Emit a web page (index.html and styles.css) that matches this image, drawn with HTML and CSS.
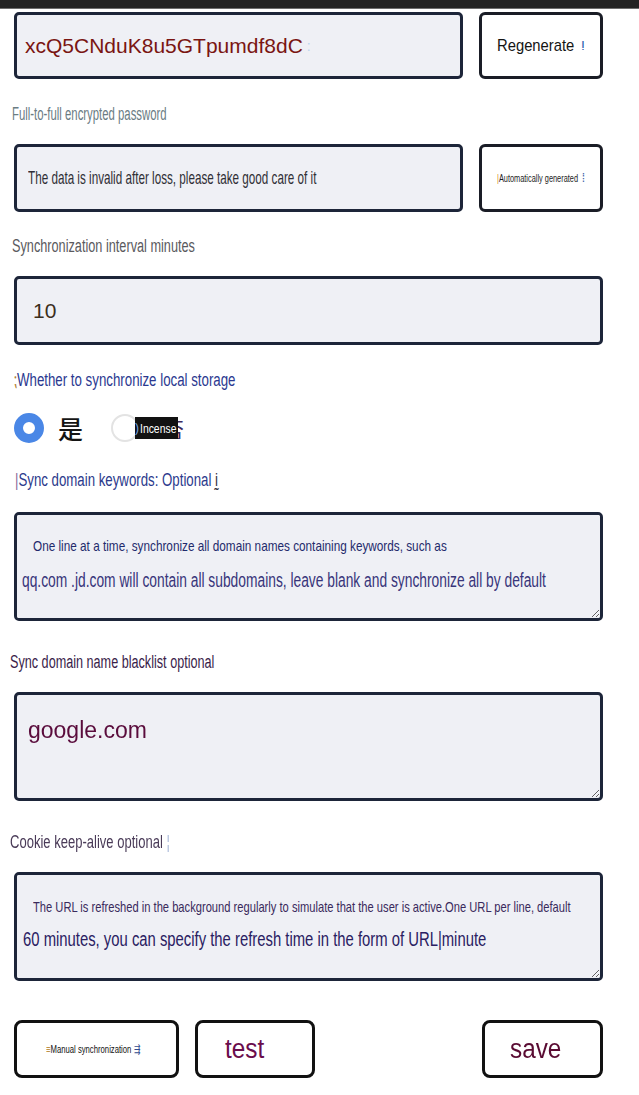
FILE: index.html
```html
<!DOCTYPE html>
<html lang="en">
<head>
<meta charset="utf-8">
<title>Sync settings</title>
<link rel="stylesheet" href="styles.css">
</head>
<body>
<div class="topbar"></div>
<main class="form">
  <div class="row r1">
    <div class="field short"><span class="t-key">xcQ5CNduK8u5GTpumdf8dC</span><span class="caret-blue">:</span></div>
    <button class="btn side"><span class="t-regen">Regenerate</span><span class="spark">ⵑ</span></button>
  </div>

  <div class="label l1"><span class="t-l1">Full-to-full encrypted password</span></div>

  <div class="row r2">
    <div class="field short f2"><span class="t-f2">The data is invalid after loss, please take good care of it</span></div>
    <button class="btn side"><span class="t-auto"><span class="bar-o">|</span>Automatically generated</span><span class="spark small">⁞</span></button>
  </div>

  <div class="label l2"><span class="t-l2">Synchronization interval minutes</span></div>

  <div class="field full f3"><span class="t-ten">10</span></div>

  <div class="label l3"><span class="t-l3"><span class="dot">⁏</span>Whether to synchronize local storage</span></div>

  <div class="radios">
    <span class="radio on"></span>
    <span class="cjk">是</span>
    <span class="radio off"></span>
    <span class="tip"><span class="paren">)</span><span class="t-inc">Incense</span></span>
    <span class="cjk-cut">否</span>
  </div>

  <div class="label l4"><span class="t-l4"><span class="cursor">|</span>Sync domain keywords: Optional <span class="dot2">ḭ</span></span></div>

  <div class="area a1">
    <div class="ln1"><span class="t-a1a">One line at a time, synchronize all domain names containing keywords, such as</span></div>
    <div class="ln2"><span class="t-a1b">qq.com .jd.com will contain all subdomains, leave blank and synchronize all by default</span></div>
  </div>

  <div class="label l5"><span class="t-l5">Sync domain name blacklist optional</span></div>

  <div class="area a2">
    <div class="ln1"><span class="t-google">google.com</span></div>
  </div>

  <div class="label l6"><span class="t-l6">Cookie keep-alive optional <span class="dot3">¦</span></span></div>

  <div class="area a3">
    <div class="ln1"><span class="t-a3a">The URL is refreshed in the background regularly to simulate that the user is active.One URL per line, default</span></div>
    <div class="ln2"><span class="t-a3b">60 minutes, you can specify the refresh time in the form of URL|minute</span></div>
  </div>

  <div class="actions">
    <button class="btn act manual"><span class="t-manual"><span class="g1">≡</span>Manual synchronization <span class="g2">⇶</span></span></button>
    <button class="btn act test"><span class="t-test">test</span></button>
    <span class="spacer"></span>
    <button class="btn act save"><span class="t-save">save</span></button>
  </div>
</main>
</body>
</html>
```

FILE: styles.css
```css
* { box-sizing: border-box; }

html, body {
  margin: 0;
  padding: 0;
  background: #ffffff;
}

body {
  font-family: "Liberation Sans", Arial, sans-serif;
  width: 639px;
  height: 1095px;
  overflow: hidden;
}

.topbar {
  height: 9px;
  background: #232323;
  border-bottom: 1px solid #6d6d6d;
}

.form {
  padding: 0 36px 0 14px;
  display: flex;
  flex-direction: column;
}

.row {
  display: flex;
  gap: 16px;
}

.r1 { margin-top: 3px; height: 67px; }
.r2 { margin-top: 20px; height: 68px; }

.field {
  border: 3px solid #1d2539;
  border-radius: 5px;
  background: #eff0f5;
  display: flex;
  align-items: center;
  white-space: nowrap;
  overflow: hidden;
}

.field.short { width: 449px; padding-left: 8px; }
.field.f2 { padding-left: 11px; }
.field.full { width: 589px; }
.f3 { margin-top: 20px; height: 69px; padding-left: 16px; }

.btn {
  font-family: "Liberation Sans", Arial, sans-serif;
  background: #ffffff;
  border: 3px solid #1a1d26;
  border-radius: 6px;
  padding: 0;
  display: flex;
  align-items: center;
  justify-content: center;
  white-space: nowrap;
  color: #111;
}

.btn.side { width: 124px; }

span[class^="t-"] {
  display: inline-block;
  transform-origin: left center;
  white-space: nowrap;
}

.t-key { font-size: 21px; color: #7a1512; }
.caret-blue { color: #b9d4ee; font-size: 14px; margin-left: 4px; }

.t-regen { font-size: 17px; color: #141414; transform: scaleX(0.87); margin-right: -6px; }
.spark { font-size: 13px; color: #2d5fb0; margin-left: 2px; }
.spark.small { font-size: 12px; color: #3e62a8; margin-left: 0; }

.t-f2 { font-size: 19px; color: #2f2f36; transform: scaleX(0.615); }

.t-auto { font-size: 11px; color: #1c1c1c; transform: scaleX(0.67); margin-right: -36px; }
.bar-o { color: #d08a22; }

.t-ten { font-size: 21px; color: #3b2f1c; }

.label {
  height: 20px;
  line-height: 20px;
  font-size: 18px;
  white-space: nowrap;
}

.l1 { margin-top: 25px; margin-left: -2px; }
.l2 { margin-top: 24px; margin-left: -2px; }
.l3 { margin-top: 25px; margin-left: 0; }
.l4 { margin-top: 24px; margin-left: 1px; }
.l5 { margin-top: 31px; margin-left: -4px; }
.l6 { margin-top: 31px; margin-left: -4px; }

.t-l1 { color: #6a7c83; transform: scaleX(0.631); }
.t-l2 { color: #5a5a5e; transform: scaleX(0.706); }
.t-l3 { color: #2b3990; transform: scaleX(0.738); }
.t-l4 { color: #2b3a8c; transform: scaleX(0.736); }
.t-l5 { color: #3a1d4a; transform: scaleX(0.702); }
.t-l6 { color: #4a3b58; transform: scaleX(0.724); }

.dot { color: #b08030; }
.cursor { color: #8a6a9a; }
.dot2 { color: #303040; }
.dot3 { color: #a8b8d8; }

.radios {
  margin-top: 20px;
  height: 36px;
  display: flex;
  align-items: center;
}

.radio {
  display: block;
  border-radius: 50%;
  flex: none;
}

.radio.on {
  width: 30px;
  height: 30px;
  border: 9px solid #4a87e6;
  background: #ffffff;
}

.cjk {
  font-family: "Noto Sans CJK SC", "Noto Sans CJK JP", sans-serif;
  font-size: 25px;
  font-weight: 500;
  line-height: 1;
  color: #141414;
  margin-left: 14px;
}

.radio.off {
  width: 28px;
  height: 28px;
  border: 2px solid #e3e3e3;
  background: #ffffff;
  margin-left: 28px;
}

.tip {
  position: relative;
  margin-left: -4px;
  height: 22px;
  width: 43px;
  background: #121212;
  display: flex;
  align-items: center;
  overflow: hidden;
  z-index: 1;
}

.paren { color: #7aa8e8; font-size: 12px; margin-left: 0; }
.t-inc { font-size: 13px; color: #ffffff; transform: scaleX(0.8); margin-left: 1px; }

.cjk-cut {
  font-family: "Noto Sans CJK SC", "Noto Sans CJK JP", sans-serif;
  font-size: 22px;
  line-height: 1;
  color: #3a2a60;
  width: 7px;
  overflow: hidden;
  margin-left: -1px;
  display: inline-block;
  direction: rtl;
}

.area {
  width: 589px;
  height: 109px;
  border: 3px solid #1d2539;
  border-radius: 5px;
  background: #eff0f5;
  resize: vertical;
  overflow: auto;
  white-space: nowrap;
}

.a1 { margin-top: 22px; padding-top: 14px; }
.a2 { margin-top: 20px; padding-top: 18px; }
.a3 { margin-top: 20px; padding-top: 15px; }

.area .ln1, .area .ln2 { height: 34px; line-height: 34px; }
.a3 .ln1, .a3 .ln2 { height: 33px; line-height: 33px; }

.a1 .ln1 { padding-left: 16px; }
.a1 .ln2 { padding-left: 5px; }
.a2 .ln1 { padding-left: 11px; }
.a3 .ln1 { padding-left: 16px; }
.a3 .ln2 { padding-left: 6px; }

.t-a1a { font-size: 15px; color: #1f2b6c; transform: scaleX(0.784); }
.t-a1b { font-size: 20px; color: #38357a; transform: scaleX(0.69); }
.t-google { font-size: 23px; color: #5a0c3c; }
.t-a3a { font-size: 15px; color: #3a2a5c; transform: scaleX(0.744); }
.t-a3b { font-size: 20px; color: #2a2062; transform: scaleX(0.742); }

.actions {
  margin-top: 39px;
  height: 58px;
  display: flex;
  gap: 16px;
  width: 589px;
}

.btn.act { height: 58px; border-color: #111111; border-radius: 8px; }
.manual { width: 165px; }
.test { width: 120px; }
.save { width: 121px; }
.spacer { flex: 1; }

.t-manual { font-size: 11px; color: #121212; transform: scaleX(0.7); margin-right: -34px; }
.g1 { color: #b07a20; }
.g2 { color: #304c90; }
.t-test { font-size: 27px; color: #6a0d4c; transform: scaleX(0.9); margin-right: 16px; }
.t-save { font-size: 27px; color: #5a0b32; transform: scaleX(0.9); margin-right: 8px; }
```
